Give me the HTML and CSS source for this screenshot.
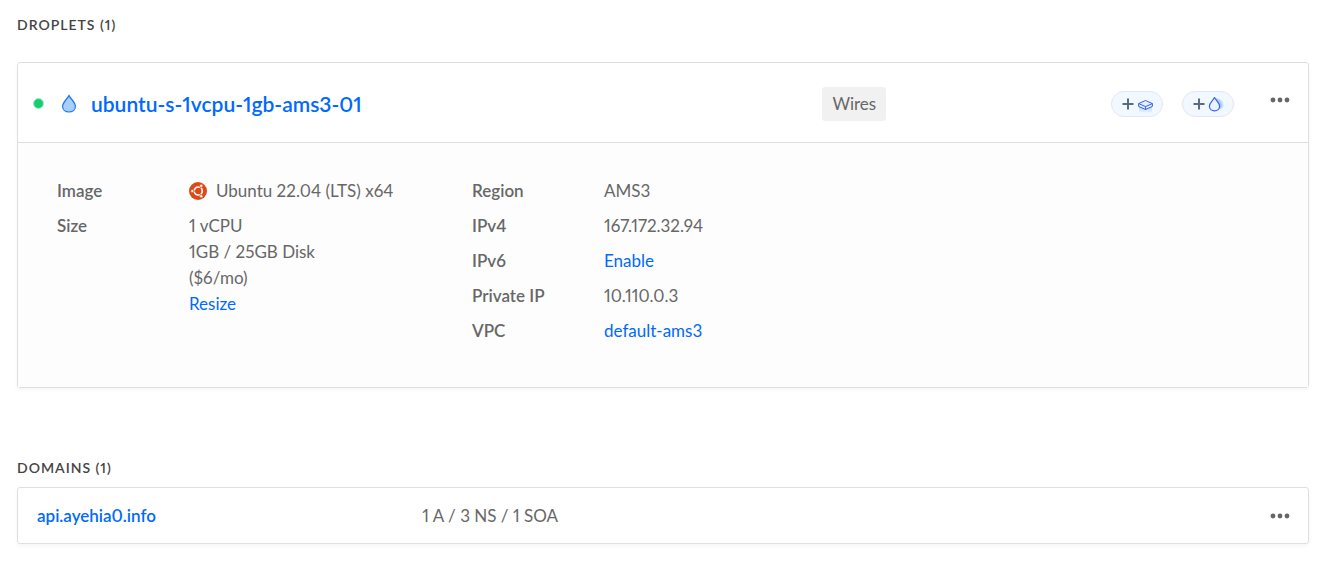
FILE: index.html
```html
<!DOCTYPE html>
<html lang="en">
<head>
  <meta charset="UTF-8">
  <meta name="viewport" content="width=device-width, initial-scale=1.0">
  <title>Project resources</title>
  <link rel="stylesheet" href="styles.css">
</head>
<body>
  <main class="resources">
    <section class="droplets">
      <h2>Droplets (1)</h2>
      <div class="card">
        <div class="card-header">
          <div class="droplet-title">
            <span class="status" title="Active"></span>
            <svg class="drop-icon" width="16" height="20" viewBox="0 0 16 20" aria-hidden="true">
              <path d="M8 1.6C6 5.300 1.600 8.400 1.600 12.200C1.600 15.800 4.500 18 8 18C11.500 18 14.400 15.800 14.400 12.200C14.400 8.400 10 5.300 8 1.600Z" fill="#a9cdfd" stroke="#1f77f5" stroke-width="1.2"/>
            </svg>
            <a href="#" class="droplet-name">ubuntu-s-1vcpu-1gb-ams3-01</a>
          </div>
          <div class="droplet-side">
            <span class="tag">Wires</span>
            <div class="actions">
              <button type="button" class="pill" aria-label="Add volume">
                <svg width="32" height="20" viewBox="0 0 32 20">
                  <defs>
                    <linearGradient id="fade" x1="0" y1="0" x2="0" y2="1">
                      <stop offset="0" stop-color="#9cc5ff"/>
                      <stop offset="1" stop-color="#d8e9ff" stop-opacity="0.4"/>
                    </linearGradient>
                  </defs>
                  <path d="M1.500 10H12.500M7 4.500V15.500" stroke="#5b6987" stroke-width="2"/>
                  <path d="M18 11H31V18.500H18Z" fill="url(#fade)"/>
                  <path d="M24.500 6.500L31.400 9.600V12.400L24.500 15.500L17.600 12.400V9.600Z" fill="#e4efff"/>
                  <path d="M24.500 6.500L31.400 9.600L24.500 12.600L17.600 9.600ZM17.600 9.600V12.400L24.500 15.500L31.400 12.400V9.600M24.500 12.600V15.500" fill="none" stroke="#3663e0" stroke-width="1" stroke-linejoin="round"/>
                </svg>
              </button>
              <button type="button" class="pill" aria-label="Add droplet">
                <svg width="32" height="20" viewBox="0 0 32 20">
                  <path d="M1.500 10H12.500M7 4.500V15.500" stroke="#5b6987" stroke-width="2"/>
                  <path d="M26 4.500C30 5.500 32 9 31.600 12C31 14.500 29 15.500 26 16Z" fill="#cfe3ff"/>
                  <path d="M24 4C27.500 5 30 9 30 12C29.600 14.600 27 16 23.500 16Z" fill="#a5cbff"/>
                  <path d="M22.500 3.600C21.300 6.300 17.400 8.800 17.400 12.200C17.400 14.900 19.700 16.800 22.500 16.800C25.300 16.800 27.600 14.900 27.600 12.200C27.600 8.800 23.700 6.300 22.500 3.600Z" fill="#eaf3ff" stroke="#3663e0" stroke-width="1.2" stroke-linejoin="round"/>
                </svg>
              </button>
              <button type="button" class="more" aria-label="Droplet actions">
                <svg width="20" height="6" viewBox="0 0 20 6" fill="#666">
                  <circle cx="3" cy="3" r="2.400"/>
                  <circle cx="10" cy="3" r="2.400"/>
                  <circle cx="17" cy="3" r="2.400"/>
                </svg>
              </button>
            </div>
          </div>
        </div>

        <div class="card-body">
          <dl class="details">
            <dt>Image</dt>
            <dd class="image-name">
              <svg width="18" height="18" viewBox="0 0 18 18" aria-hidden="true">
                <circle cx="9" cy="9" r="9" fill="#dd4814"/>
                <circle cx="9.300" cy="9" r="4" fill="none" stroke="#fff" stroke-width="1.700"/>
                <path d="M9.300 9H3M9.300 9L12.500 3.500M9.300 9L12.500 14.500" stroke="#dd4814" stroke-width="1"/>
                <circle cx="9.300" cy="9" r="2.800" fill="#dd4814"/>
                <g fill="#fff" stroke="#dd4814" stroke-width="0.600">
                  <circle cx="3.300" cy="9" r="1.600"/>
                  <circle cx="12.200" cy="3.800" r="1.600"/>
                  <circle cx="12.200" cy="14.200" r="1.600"/>
                </g>
              </svg>
              Ubuntu 22.04 (LTS) x64
            </dd>
            <dt>Size</dt>
            <dd>1 vCPU<br>1GB / 25GB Disk<br>($6/mo)<br><a href="#">Resize</a></dd>
          </dl>
          <dl class="details">
            <dt>Region</dt>
            <dd>AMS3</dd>
            <dt>IPv4</dt>
            <dd>167.172.32.94</dd>
            <dt>IPv6</dt>
            <dd><a href="#">Enable</a></dd>
            <dt>Private IP</dt>
            <dd>10.110.0.3</dd>
            <dt>VPC</dt>
            <dd><a href="#">default-ams3</a></dd>
          </dl>
        </div>
      </div>
    </section>

    <section class="domains">
      <h2>Domains (1)</h2>
      <div class="card domain">
        <a href="#" class="domain-name">api.ayehia0.info</a>
        <span>1 A / 3 NS / 1 SOA</span>
        <button type="button" class="more" aria-label="Domain actions">
          <svg width="20" height="6" viewBox="0 0 20 6" fill="#666">
            <circle cx="3" cy="3" r="2.400"/>
            <circle cx="10" cy="3" r="2.400"/>
            <circle cx="17" cy="3" r="2.400"/>
          </svg>
        </button>
      </div>
    </section>
  </main>
</body>
</html>
```
FILE: styles.css
```css
* {
  box-sizing: border-box;
}
body {
  margin: 0;
  background-color: #fff;
  color: #676767;
  font-family: Lato, sans-serif;
  font-size: 17px;
  font-variant-numeric: proportional-nums;
  line-height: 26px;
}
a {
  color: #0069ff;
  text-decoration: none;
}
a:hover {
  text-decoration: underline;
}
button {
  padding: 0;
  border: none;
  background: none;
  cursor: pointer;
}
svg {
  display: block;
  flex: none;
}
.resources {
  padding: 15px 17px 23px;
}
h2 {
  margin: 0;
  color: #444;
  font-size: 14px;
  font-weight: 600;
  line-height: 20px;
  letter-spacing: 1px;
  text-transform: uppercase;
}
.droplets h2 {
  margin-bottom: 27px;
}
.domains {
  margin-top: 70px;
}
.domains h2 {
  margin-bottom: 9px;
}
.card {
  border: 1px solid #dfdfdf;
  border-radius: 3px;
  box-shadow: 0 2px 4px rgba(0, 0, 0, 0.04);
}

/* Droplet header */
.card-header {
  display: grid;
  grid-template-columns: 5fr 3fr;
  column-gap: 10px;
  align-items: center;
  min-height: 80px;
  padding: 18px 18px 16px 15px;
  border-bottom: 1px solid #dfdfdf;
}
.droplet-title {
  display: flex;
  align-items: center;
}
.status {
  width: 11px;
  height: 11px;
  margin-right: 17px;
  border: 1px solid #a9ecca;
  border-radius: 50%;
  background-color: #15cd72;
}
.drop-icon {
  margin-right: 14px;
}
.droplet-name {
  font-size: 21px;
  font-weight: 600;
}
.droplet-side {
  display: flex;
  align-items: center;
  justify-content: space-between;
}
.tag {
  padding: 4px 10px;
  border-radius: 3px;
  background-color: #f1f1f1;
}
.actions {
  display: flex;
  align-items: flex-start;
  gap: 19px;
}
.pill {
  display: flex;
  align-items: center;
  justify-content: center;
  width: 52px;
  height: 26px;
  border: 1px solid #e3e8f0;
  border-radius: 13px;
  background-color: #f2f8ff;
}
.more {
  display: flex;
  align-items: center;
  height: 18px;
}
.actions .more {
  margin-left: 17px;
}

/* Droplet details */
.card-body {
  display: grid;
  grid-template-columns: repeat(3, 1fr);
  padding: 35px 6px 43px 39px;
  background-color: #fdfdfd;
}
.details {
  display: grid;
  grid-template-columns: 132px 1fr;
  align-content: start;
  row-gap: 9px;
  margin: 0;
}
.details dt {
  font-weight: 600;
}
.details dd {
  margin: 0;
}
.image-name {
  display: flex;
  align-items: center;
  gap: 9px;
}

/* Domain row */
.domain {
  display: grid;
  grid-template-columns: 5fr 11fr auto;
  align-items: center;
  min-height: 57px;
  padding: 0 18px 0 19px;
}
.domain-name {
  font-weight: 600;
}
```
